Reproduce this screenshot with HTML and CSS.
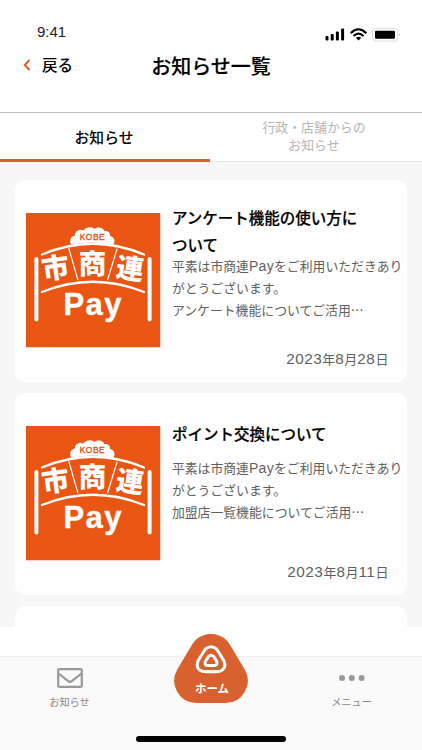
FILE: index.html
```html
<!DOCTYPE html>
<html lang="ja">
<head>
<meta charset="utf-8">
<meta name="viewport" content="width=device-width, initial-scale=1">
<title>お知らせ一覧</title>
<link rel="stylesheet" href="styles.css">
</head>
<body>
<svg class="defs" aria-hidden="true">
  <symbol id="logo" viewBox="0 0 134.5 134.5">
    <rect width="134.5" height="134.5" fill="#e95513"/>
    <g fill="none" stroke="#fff" stroke-linecap="round">
      <path d="M10.400 46v60.500M123.600 46v60.500" stroke-width="4"/>
      <path d="M16 41.500Q67 20 118 41.500M16 79Q67 58.500 118 79" stroke-width="2.400"/>
      <path d="M42.800 35.500l9 31M91 36l-9.300 30.500" stroke-width="1.200"/>
    </g>
    <path fill="#fff" d="M45.500 32C43 28.500 44 23.500 49 22.500C48.500 18 54 15.500 57.500 17.500C60 13.500 66 13.200 68.500 16C72 13.500 77 14.500 78.500 18C82.500 17.500 84.500 20 84 23C88.500 23.500 90 28.500 87 32Q66 27 45.500 32z"/>
  </symbol>
</svg>
<div class="app">
  <div class="status">
    <span class="clock">9:41</span>
    <svg class="signals" width="76" height="14" viewBox="0 0 76 14">
      <g><rect x="0.500" y="8" width="3" height="4.500" rx="1"/><rect x="5.700" y="6" width="3" height="6.500" rx="1"/><rect x="10.900" y="3.500" width="3" height="9" rx="1"/><rect x="16.100" y="0.500" width="3" height="12" rx="1"/></g>
      <g fill="none" stroke="#000" stroke-width="2.100"><path d="M25.700 5.200Q33.500-2.600 41.300 5.200M28.500 8Q33.500 3.200 38.500 8"/></g>
      <path d="M30.800 9.800Q33.500 7.600 36.200 9.800L33.500 12.500z"/>
      <rect x="47.500" y="0.500" width="25" height="12.500" rx="3" fill="#fff" stroke="#ddd"/>
      <rect x="50" y="2.800" width="20" height="8" rx="1"/><path d="M74 5q1.800 1.800 0 3.600z" fill="#999"/>
    </svg>
  </div>
  <header class="header">
    <a class="back"><svg width="8" height="12" viewBox="0 0 8 12"><path d="M6.500 1L1.800 6l4.700 5" fill="none" stroke="#d9602f" stroke-width="2"/></svg><span>戻る</span></a>
    <h1>お知らせ一覧</h1>
  </header>
  <nav class="tabs">
    <a class="tab active">お知らせ</a>
    <a class="tab">行政・店舗からの<br>お知らせ</a>
  </nav>
  <main class="list">
    <article class="card">
      <svg class="thumb" viewBox="0 0 134.5 134.5">
        <use href="#logo"/>
        <g class="logo-text" text-anchor="middle">
          <text class="logo-city" x="66.200" y="27.200" textLength="25">KOBE</text>
          <text class="logo-kanji" x="29.500" y="65" transform="rotate(-8 29.500 55)">市</text>
          <text class="logo-kanji" x="66.500" y="60.500">商</text>
          <text class="logo-kanji" x="104" y="65.500" transform="rotate(8 104 55.500)">連</text>
          <text class="logo-pay" x="66.500" y="101.500" textLength="58">Pay</text>
        </g>
      </svg>
      <div class="content">
        <h2>アンケート機能の使い方に<br>ついて</h2>
        <p>平素は市商連<span class="latin">Pay</span>をご利用いただきあり<br>がとうございます。<br>アンケート機能についてご活用…</p>
        <time>2023<i>年</i>8<i>月</i>28<i>日</i></time>
      </div>
    </article>
    <article class="card">
      <svg class="thumb" viewBox="0 0 134.5 134.5">
        <use href="#logo"/>
        <g class="logo-text" text-anchor="middle">
          <text class="logo-city" x="66.200" y="27.200" textLength="25">KOBE</text>
          <text class="logo-kanji" x="29.500" y="65" transform="rotate(-8 29.500 55)">市</text>
          <text class="logo-kanji" x="66.500" y="60.500">商</text>
          <text class="logo-kanji" x="104" y="65.500" transform="rotate(8 104 55.500)">連</text>
          <text class="logo-pay" x="66.500" y="101.500" textLength="58">Pay</text>
        </g>
      </svg>
      <div class="content short">
        <h2>ポイント交換について</h2>
        <p>平素は市商連<span class="latin">Pay</span>をご利用いただきあり<br>がとうございます。<br>加盟店一覧機能についてご活用…</p>
        <time>2023<i>年</i>8<i>月</i>11<i>日</i></time>
      </div>
    </article>
    <article class="card"></article>
  </main>
  <footer class="bar">
    <a class="item"><svg width="26" height="20" viewBox="0 0 26 20"><g fill="none" stroke="#999" stroke-width="2.200" stroke-linejoin="round"><rect x="1.200" y="1.200" width="23.600" height="17.600" rx="1"/><path d="M1.500 5.500l9.700 7.700q1.800 1.400 3.600 0l9.700-7.700"/></g></svg><span>お知らせ</span></a>
    <a class="home">
      <svg width="74" height="69" viewBox="0 0 74 69">
        <path fill="#d9602f" d="M18 10.800A22 22 0 0 1 56 10.800L70.600 35.300A22.300 22.300 0 0 1 51.500 69H22.500A22.300 22.300 0 0 1 3.400 35.300z"/>
        <g fill="none" stroke="#fff" stroke-width="3" stroke-linejoin="round">
          <path d="M31.500 15Q37 10.500 42.500 15Q46 20 50 27Q53 34.500 46 37.200Q37 38.200 28 37.200Q21 34.500 24 27Q28 20 31.500 15z"/>
          <path d="M34.500 22.500Q37 19.800 39.800 22.500L42.800 27.500Q43.800 31.300 40.500 31.600H33.500Q30.200 31.300 31.300 27.500z"/>
        </g>
        <text class="home-label" x="38" y="59" text-anchor="middle">ホーム</text>
      </svg>
    </a>
    <a class="item"><svg width="26" height="20" viewBox="0 0 26 20" fill="#999"><circle cx="3" cy="10" r="3"/><circle cx="12.800" cy="10" r="3"/><circle cx="22.600" cy="10" r="3"/></svg><span>メニュー</span></a>
    <div class="indicator"></div>
  </footer>
</div>
</body>
</html>
```
FILE: styles.css
```css
* { box-sizing: border-box; }
body { margin: 0; font-family: "Noto Sans CJK JP", sans-serif; color: #000; background: #fff; }
h1, h2, p { margin: 0; }
.defs { position: absolute; width: 0; height: 0; }
.app { width: 422px; height: 750px; display: flex; flex-direction: column; overflow: hidden; }
.status { height: 50px; padding: 22px 21px 0 37px; display: flex; justify-content: space-between; }
.clock { font: 15px/20px "Liberation Sans", sans-serif; color: #222; }
.signals { margin-top: 6px; }
.header { height: 62px; display: grid; grid-template-columns: 100px 222px 100px; align-items: start; }
.back { display: flex; align-items: center; gap: 11px; height: 30px; padding-left: 23px; font-size: 15.500px; line-height: 28px; font-weight: 500; white-space: nowrap; }
.back span { margin-top: -2px; }
h1 { font-size: 20px; line-height: 32px; font-weight: 500; text-align: center; -webkit-text-stroke: .15px; }
.tabs { height: 50px; display: grid; grid-template-columns: 210px 1fr; border-top: 1px solid #bbb; }
.tab { display: flex; align-items: center; justify-content: center; text-align: center; font-size: 12.900px; line-height: 17.500px; color: #b5b5b5; border-bottom: 1px solid #e8e8e8; padding: 0 4px 3px 0; }
.tab.active { color: #000; font-size: 14.800px; font-weight: 500; border-bottom: 3px solid #d9602f; padding: 2px 2px 0 0; }
.list { height: 465px; padding: 18px 15px 0; background: #f7f7f7; overflow: hidden; }
.card { height: 202px; margin-bottom: 11px; padding: 0 0 0 11px; display: flex; gap: 11.400px; background: #fff; border-radius: 10px; }
.thumb { width: 134.500px; height: 134.500px; margin-top: 33px; flex: none; }
.content { width: 230px; padding-top: 24px; display: flex; flex-direction: column; white-space: nowrap; }
.content.short { padding-top: 27px; }
h2 { font-size: 15.500px; line-height: 27px; font-weight: 500; margin-bottom: -3px; -webkit-text-stroke: .2px; }
.short h2 { margin-bottom: 10px; }
p { font-size: 12.850px; line-height: 22px; color: #5f5f5f; }
.latin { font-family: "Liberation Sans", sans-serif; font-size: 14px; letter-spacing: .3px; line-height: 1; }
time { margin-top: auto; margin-bottom: 13px; padding-right: 13.500px; text-align: right; color: #5f5f5f; font: 15.300px/20px "Liberation Sans", sans-serif; letter-spacing: .52px; }
time i { font: 13px/20px "Noto Sans CJK JP", sans-serif; letter-spacing: 0; }
.logo-text { fill: #fff; font-family: "Noto Sans CJK JP", sans-serif; font-weight: 700; }
.logo-city { font: 400 8.400px "Liberation Sans", sans-serif; fill: #e95513; stroke: #e95513; stroke-width: .35px; }
.logo-kanji { font-size: 27.500px; font-weight: 900; }
.logo-pay { font: 700 31px "Liberation Sans", sans-serif; stroke: #fff; stroke-width: .4px; stroke-linejoin: round; }
.bar { position: relative; height: 94px; margin-top: 29px; display: grid; grid-template-columns: 141px 140px 141px; background: #fafafa; border-top: 1px solid #f0f0f0; }
.item { display: flex; flex-direction: column; align-items: center; gap: 6px; padding-top: 11px; font-size: 10.200px; line-height: 16px; color: #888; }
.item:first-child { padding-right: 2px; }
.home { justify-self: center; height: 69px; margin-top: -23px; }
.home svg { display: block; }
.home-label { font: 700 11.500px "Noto Sans CJK JP", sans-serif; fill: #fff; }
.indicator { position: absolute; left: 136px; top: 79px; width: 150px; height: 6px; border-radius: 3px; background: #000; }
```
